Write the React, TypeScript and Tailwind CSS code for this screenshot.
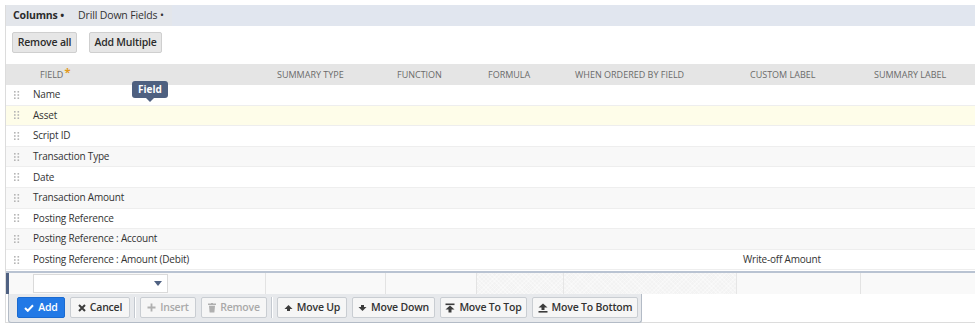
import React from "react";

const rows = [
  "Name",
  "Asset",
  "Script ID",
  "Transaction Type",
  "Date",
  "Transaction Amount",
  "Posting Reference",
  "Posting Reference : Account",
  "Posting Reference : Amount (Debit)",
];

const cols = "grid-cols-[21px_239px_120px_91px_87px_173px_124px_114px]";

function Grip() {
  return (
    <svg width="6" height="10" viewBox="0 0 6 10" className="block">
      {[0, 1, 2].map((r) =>
        [0, 1].map((c) => (
          <rect key={`${r}-${c}`} x={c * 3.5} y={1 + r * 3.2} width="1.6" height="1.6" fill="#b5b5b5" />
        ))
      )}
    </svg>
  );
}

function UpIcon() {
  return (
    <svg width="9" height="8" viewBox="0 0 9 8">
      <path d="M4.5 1 L8.5 5 L6 5 L6 7 L3 7 L3 5 L0.5 5 Z" fill="#3c3c3c" />
    </svg>
  );
}
function DownIcon() {
  return (
    <svg width="9" height="8" viewBox="0 0 9 8">
      <path d="M3 1 L6 1 L6 3 L8.5 3 L4.5 7 L0.5 3 L3 3 Z" fill="#3c3c3c" />
    </svg>
  );
}
function TopIcon() {
  return (
    <svg width="10" height="10" viewBox="0 0 10 10">
      <rect x="0.5" y="0.5" width="9" height="1.6" fill="#3c3c3c" />
      <path d="M5 2.5 L9.5 6.5 L6.5 6.5 L6.5 9.5 L3.5 9.5 L3.5 6.5 L0.5 6.5 Z" fill="#3c3c3c" />
    </svg>
  );
}
function BottomIcon() {
  return (
    <svg width="10" height="10" viewBox="0 0 10 10">
      <path d="M5 0.5 L9.5 4.5 L6.5 4.5 L6.5 7 L3.5 7 L3.5 4.5 L0.5 4.5 Z" fill="#3c3c3c" />
      <rect x="0.5" y="8" width="9" height="1.6" fill="#3c3c3c" />
    </svg>
  );
}

function Btn({
  children,
  w,
  disabled,
}: {
  children: React.ReactNode;
  w: string;
  disabled?: boolean;
}) {
  return (
    <div
      className={`${w} h-[21px] flex items-center justify-center gap-[4px] rounded-[2px] border border-[#c9cdd2] bg-[#f6f6f6] text-[10.5px] tracking-[-0.2px] font-semibold ${
        disabled ? "text-[#a9a9a9]" : "text-[#333]"
      }`}
    >
      {children}
    </div>
  );
}

function Sep() {
  return <div className="w-[1px] h-[21px] bg-[#c4c9d0] mx-[-1px] border-r border-white box-content" />;
}

const hatch = {
  backgroundColor: "#f3f3f3",
  backgroundImage:
    "repeating-linear-gradient(45deg, rgba(255,255,255,0.35) 0 1px, transparent 1px 3px), repeating-linear-gradient(-45deg, rgba(255,255,255,0.35) 0 1px, transparent 1px 3px)",
};

export default function App() {
  return (
    <div
      className="w-[975px] h-[327px] bg-white overflow-hidden pt-[5px] text-[#333]"
      style={{ fontFamily: "'Open Sans', 'DejaVu Sans', sans-serif" }}
    >
      <div className="ml-[5px] border-l border-[#dcdcdc] h-[318px] border-b relative">
        {/* tabs */}
        <div className="h-[21px] bg-[#e1e6ef] flex items-center">
          <div className="h-full bg-[#e3e6eb] flex items-center pl-[7px] pr-[8px] text-[10.5px] tracking-[-0.15px]">
            <span className="font-bold text-[#2b2b2b]">Columns •</span>
            <span className="ml-[14px] text-[#333]">Drill Down Fields •</span>
          </div>
        </div>
        {/* buttons */}
        <div className="flex gap-[12px] pl-[6px] pt-[6px] h-[38px]">
          <div className="h-[21px] w-[65px] flex items-center justify-center rounded-[2px] border border-[#cfcfcf] bg-[#e6e6e6] text-[10.5px] tracking-[-0.2px] font-semibold text-[#2b2b2b]">
            Remove all
          </div>
          <div className="h-[21px] w-[73px] flex items-center justify-center rounded-[2px] border border-[#cfcfcf] bg-[#e6e6e6] text-[10.5px] tracking-[-0.2px] font-semibold text-[#2b2b2b]">
            Add Multiple
          </div>
        </div>
        {/* header */}
        <div className={`grid ${cols} h-[21px] bg-[#e5e5e5] text-[9px] text-[#6b6b6b] items-center`}>
          <div />
          <div className="pl-[13px]">
            FIELD<span className="text-[#e29a1b] text-[11px] font-bold relative top-[-2px] ml-[1px]">*</span>
          </div>
          <div className="pl-[11px]">SUMMARY TYPE</div>
          <div className="pl-[11px]">FUNCTION</div>
          <div className="pl-[11px]">FORMULA</div>
          <div className="pl-[11px]">WHEN ORDERED BY FIELD</div>
          <div className="pl-[13px]">CUSTOM LABEL</div>
          <div className="pl-[13px]">SUMMARY LABEL</div>
        </div>
        {/* rows */}
        {rows.map((r, i) => {
          const bg = i === 1 ? "bg-[#fefde9]" : i % 2 === 1 ? "bg-[#f8f8f8]" : "bg-white";
          return (
            <div
              key={r}
              className={`grid ${cols} h-[20.6px] ${bg} border-b border-[#eeeeee] text-[10px] tracking-[-0.2px] text-[#333] items-center`}
            >
              <div className="flex justify-center pl-[1px]">
                <Grip />
              </div>
              <div className="pl-[6px] whitespace-nowrap">{r}</div>
              <div />
              <div />
              <div />
              <div />
              <div className="pl-[6px] whitespace-nowrap">{i === 8 ? "Write-off Amount" : ""}</div>
              <div />
            </div>
          );
        })}
        {/* edit row */}
        <div className={`grid ${cols} h-[23px] mt-[0.5px] border-t-2 border-[#b9c3d2] bg-[#f9f9f9] relative`}>
          <div className="border-l-[3px] border-[#4f6182] h-full" />
          <div className="border-r border-[#e3e3e3] h-full flex items-center pl-[6px]">
            <div className="w-[135px] h-[19px] bg-white border border-[#dadada] flex items-center justify-end pr-[5px]">
              <svg width="8" height="5" viewBox="0 0 8 5">
                <path d="M0 0 L8 0 L4 5 Z" fill="#4f6182" />
              </svg>
            </div>
          </div>
          <div className="border-r border-[#e3e3e3] h-full" />
          <div className="border-r border-[#e3e3e3] h-full" />
          <div className="border-r border-[#e6e6e6] h-full" style={hatch} />
          <div className="border-r border-[#e6e6e6] h-full" style={hatch} />
          <div className="border-r border-[#e3e3e3] h-full" />
          <div className="h-full" />
        </div>
        {/* action bar */}
        <div className="ml-[2px] w-[634px] h-[29px] bg-[#e7e9ec] border border-t-0 border-[#b3bbc6] rounded-b-[3px] flex items-center gap-[5px] pl-[8px]">
          <div className="w-[48px] h-[21px] flex items-center justify-center gap-[4px] rounded-[2px] bg-[#2279e6] border border-[#1a6ad0] text-white text-[10.5px] tracking-[-0.2px] font-semibold">
            <svg width="10" height="8" viewBox="0 0 10 8">
              <path d="M1 4 L3.8 6.8 L9 1.2" stroke="white" strokeWidth="2" fill="none" />
            </svg>
            Add
          </div>
          <Btn w="w-[60px]">
            <svg width="8" height="8" viewBox="0 0 8 8">
              <path d="M1 1 L7 7 M7 1 L1 7" stroke="#3c3c3c" strokeWidth="2" />
            </svg>
            Cancel
          </Btn>
          <Sep />
          <Btn w="w-[56px]" disabled>
            <svg width="9" height="9" viewBox="0 0 9 9">
              <path d="M4.5 0.5 V8.5 M0.5 4.5 H8.5" stroke="#b0b0b0" strokeWidth="1.8" />
            </svg>
            Insert
          </Btn>
          <Btn w="w-[66px]" disabled>
            <svg width="8" height="10" viewBox="0 0 8 10">
              <rect x="0" y="0.5" width="8" height="1.5" fill="#b0b0b0" />
              <rect x="3" y="0" width="2" height="1" fill="#b0b0b0" />
              <path d="M1 2.8 H7 L6.4 9.5 H1.6 Z" fill="#b0b0b0" />
            </svg>
            Remove
          </Btn>
          <Sep />
          <Btn w="w-[70px]">
            <UpIcon />
            Move Up
          </Btn>
          <Btn w="w-[83px]">
            <DownIcon />
            Move Down
          </Btn>
          <Btn w="w-[87px]">
            <TopIcon />
            Move To Top
          </Btn>
          <Btn w="w-[106px]">
            <BottomIcon />
            Move To Bottom
          </Btn>
        </div>
        {/* tooltip */}
        <div className="absolute left-[126px] top-[76px] flex flex-col items-center">
          <div className="h-[17px] px-[6px] rounded-[3px] bg-[#4e6080] text-white text-[10px] font-bold flex items-center">
            Field
          </div>
          <div className="w-0 h-0 border-l-[4px] border-r-[4px] border-t-[4px] border-l-transparent border-r-transparent border-t-[#4e6080]" />
        </div>
      </div>
    </div>
  );
}
